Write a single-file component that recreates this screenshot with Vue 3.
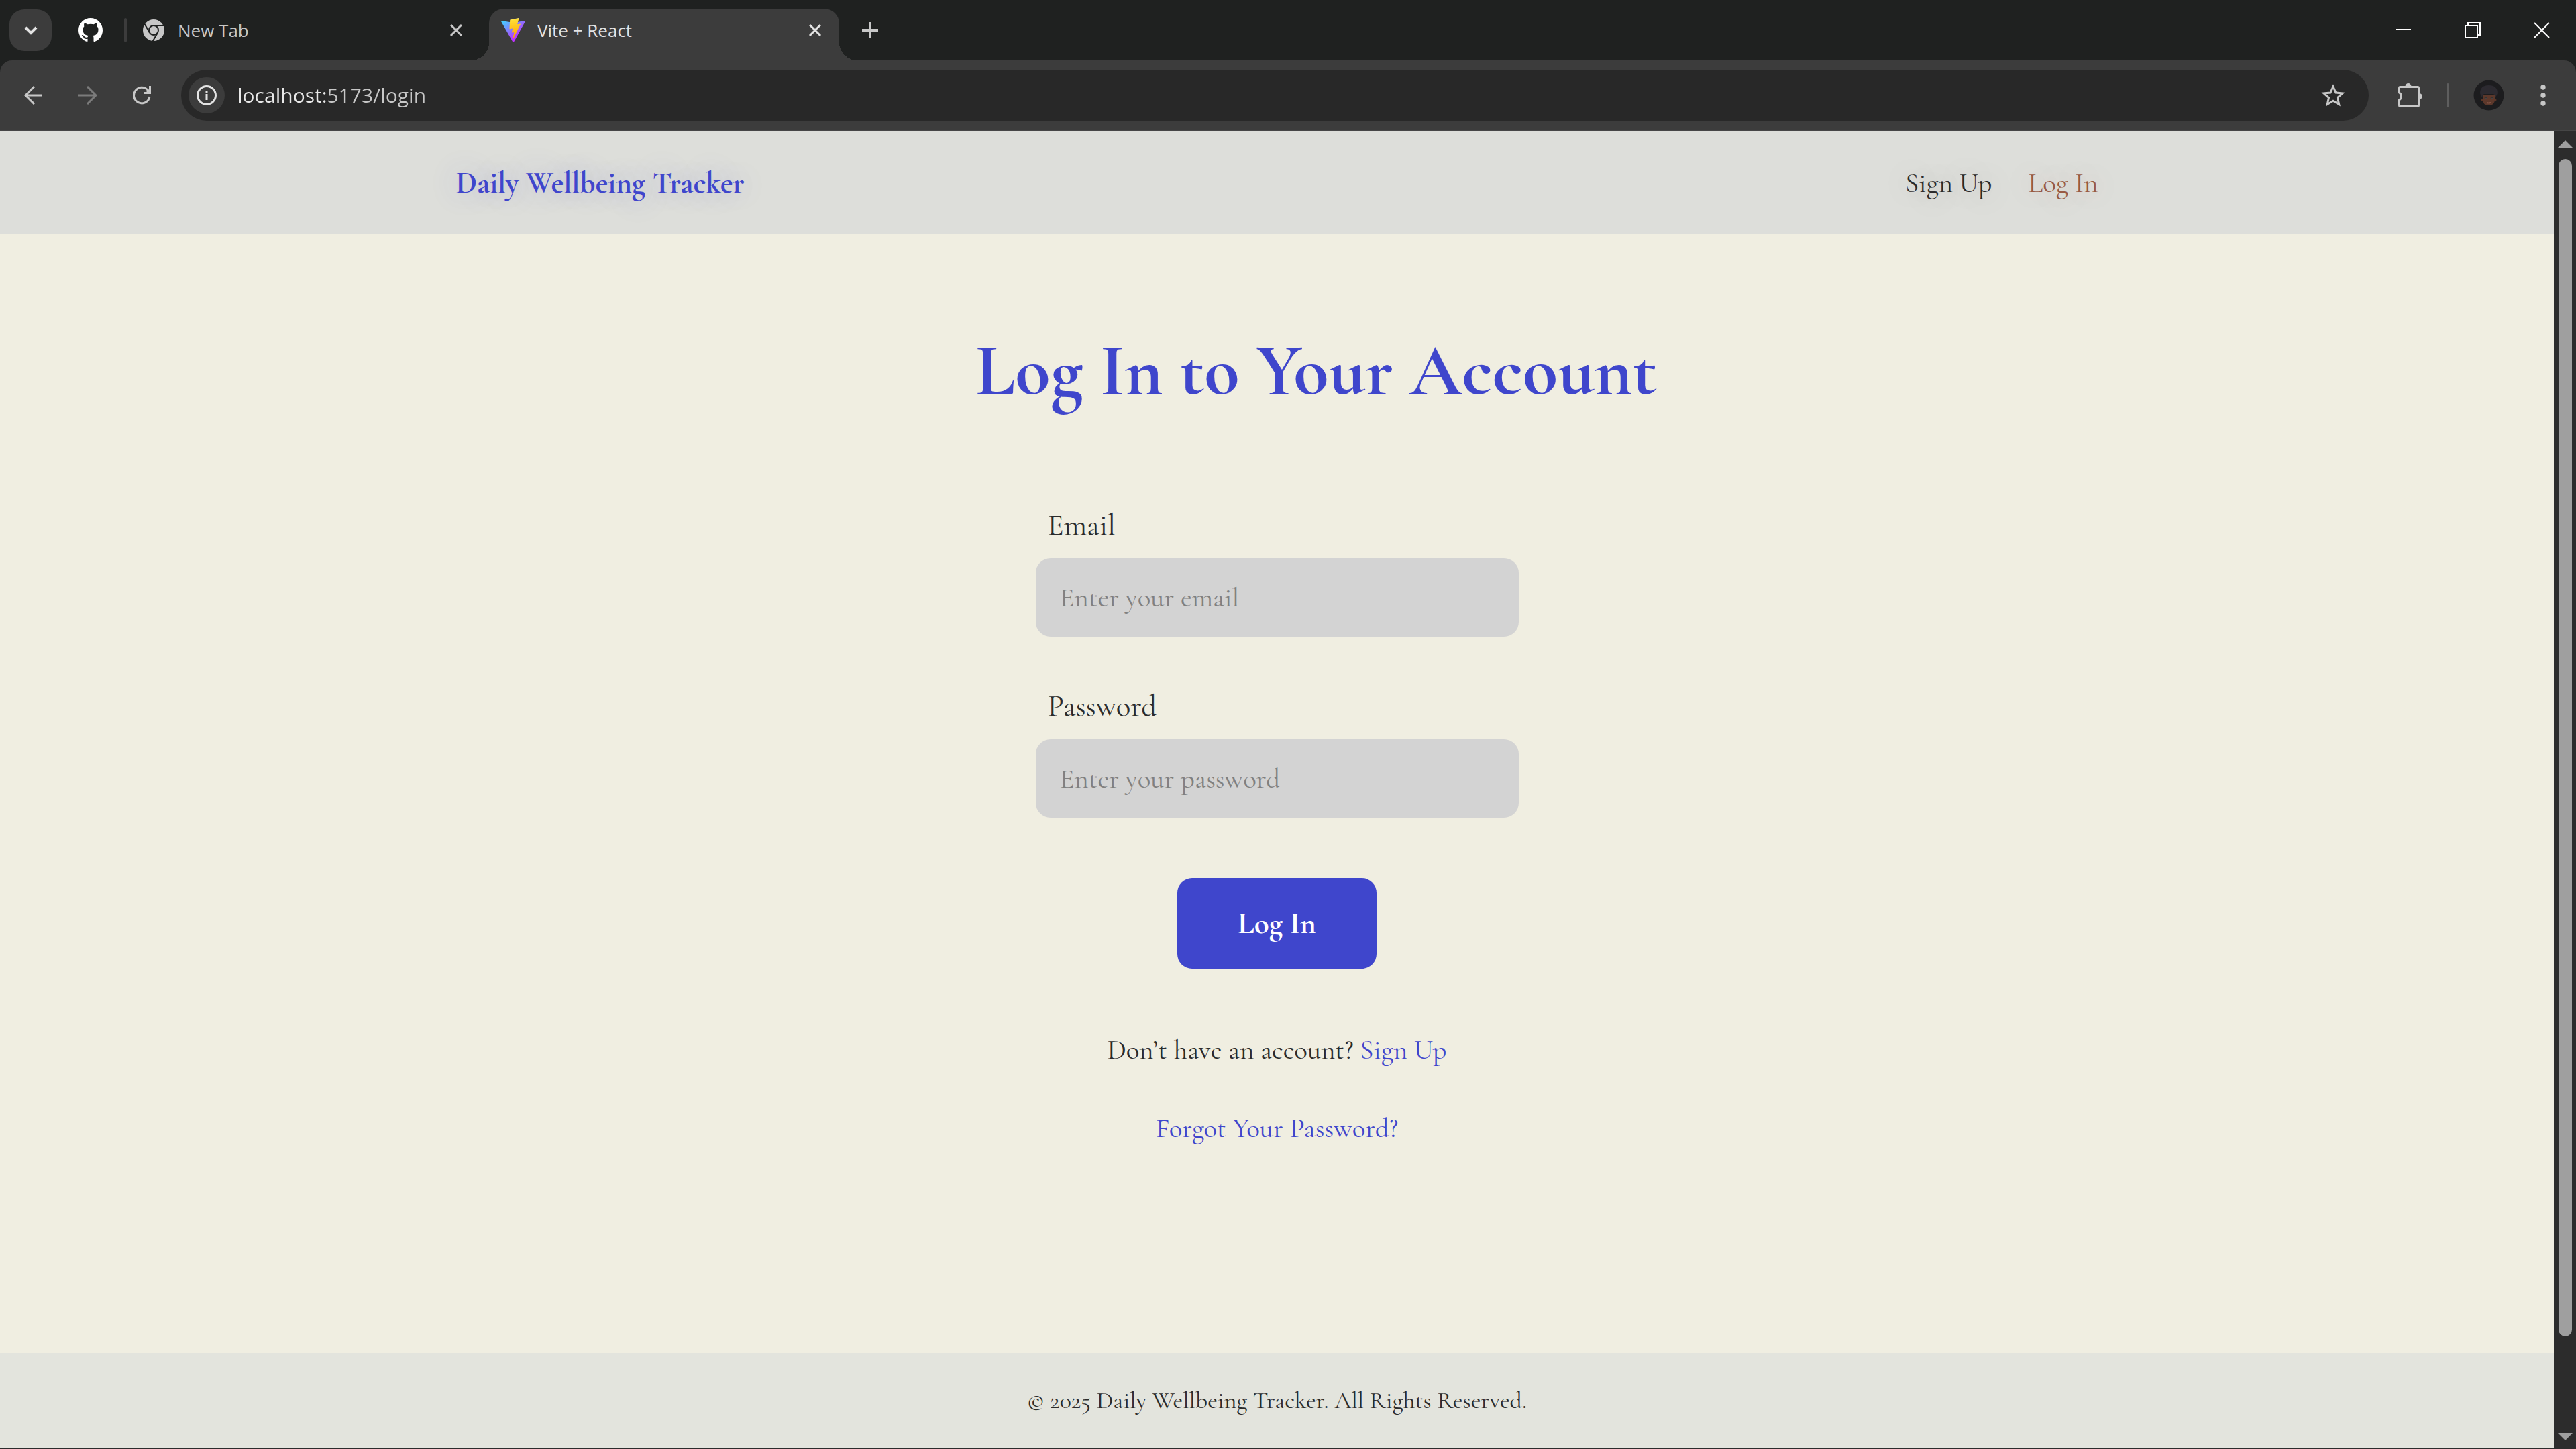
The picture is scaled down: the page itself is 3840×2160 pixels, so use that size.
<script setup>
import { ref } from 'vue'

const url = ref('localhost:5173/login')
const email = ref('')
const password = ref('')
const year = 2025
</script>

<template>
  <div class="window">
    <header class="chrome">
      <div class="tabstrip">
        <button class="tab-search" aria-label="Search tabs">
          <svg width="20" height="16" viewBox="0 0 20 16"><path d="M2 4l8 8 8-8" fill="none" stroke="#e3e3e3" stroke-width="4" /></svg>
        </button>
        <button class="pinned" aria-label="GitHub">
          <svg width="36" height="36" viewBox="0 0 16 16"><path fill="#fff" d="M8 0C3.58 0 0 3.58 0 8c0 3.54 2.29 6.53 5.47 7.59.4.07.55-.17.55-.38 0-.19-.01-.82-.01-1.49-2.01.37-2.53-.49-2.69-.94-.09-.23-.48-.94-.82-1.13-.28-.15-.68-.52-.01-.53.63-.01 1.08.58 1.23.82.72 1.21 1.87.87 2.33.66.07-.52.28-.87.51-1.07-1.78-.2-3.64-.89-3.64-3.95 0-.87.31-1.59.82-2.15-.08-.2-.36-1.02.08-2.12 0 0 .67-.21 2.2.82.64-.18 1.32-.27 2-.27s1.36.09 2 .27c1.53-1.04 2.2-.82 2.2-.82.44 1.1.16 1.92.08 2.12.51.56.82 1.27.82 2.15 0 3.07-1.87 3.75-3.65 3.95.29.25.54.73.54 1.48 0 1.07-.01 1.93-.01 2.2 0 .21.15.46.55.38A8.01 8.01 0 0 0 16 8c0-4.42-3.58-8-8-8z" /></svg>
        </button>
        <span class="strip-divider"></span>
        <div class="tab">
          <svg width="32" height="32" viewBox="0 0 32 32">
            <circle cx="16" cy="16" r="16" fill="#c7c7c7" />
            <g fill="none" stroke="#1f2120" stroke-width="2">
              <circle cx="16" cy="16" r="7" />
              <path d="M16 9h15M9.900 19.500L2.400 6.500M22.100 19.500L14.600 32.500" />
            </g>
          </svg>
          <span class="tab-title">New Tab</span>
          <button class="tab-close" aria-label="Close New Tab">
            <svg width="20" height="20" viewBox="0 0 20 20"><path d="M2 2l16 16M18 2L2 18" stroke="#c7c7c7" stroke-width="3" /></svg>
          </button>
        </div>
        <div class="tab active">
          <svg width="36" height="36" viewBox="0 0 256 257">
            <defs>
              <linearGradient id="vite-body" x1="-.828%" x2="57.636%" y1="7.652%" y2="78.411%"><stop offset="0%" stop-color="#41D1FF" /><stop offset="100%" stop-color="#BD34FE" /></linearGradient>
              <linearGradient id="vite-bolt" x1="43.376%" x2="50.316%" y1="2.242%" y2="89.030%"><stop offset="0%" stop-color="#FFEA83" /><stop offset="8.333%" stop-color="#FFDD35" /><stop offset="100%" stop-color="#FFA800" /></linearGradient>
            </defs>
            <path fill="url(#vite-body)" d="M255.153 37.938L134.897 252.976c-2.483 4.440-8.862 4.466-11.382.048L.875 37.958c-2.746-4.814 1.371-10.646 6.827-9.670l120.385 21.517a6.537 6.537 0 0 0 2.322-.004l117.867-21.483c5.438-.991 9.574 4.796 6.877 9.620Z" />
            <path fill="url(#vite-bolt)" d="M185.432.063L96.440 17.501a3.268 3.268 0 0 0-2.634 3.014l-5.474 92.456a3.268 3.268 0 0 0 3.997 3.378l24.777-5.718c2.318-.535 4.413 1.507 3.936 3.838l-7.361 36.047c-.495 2.426 1.782 4.500 4.151 3.780l15.304-4.649c2.372-.720 4.652 1.360 4.150 3.788l-11.698 56.621c-.732 3.542 3.979 5.473 5.943 2.437l1.313-2.028l72.516-144.720c1.215-2.423-.880-5.186-3.540-4.672l-25.505 4.922c-2.396.462-4.435-1.770-3.759-4.114l16.646-57.705c.677-2.350-1.370-4.583-3.769-4.113Z" />
          </svg>
          <span class="tab-title">Vite + React</span>
          <button class="tab-close" aria-label="Close Vite + React">
            <svg width="20" height="20" viewBox="0 0 20 20"><path d="M2 2l16 16M18 2L2 18" stroke="#e3e3e3" stroke-width="3" /></svg>
          </button>
        </div>
        <button class="new-tab" aria-label="New tab">
          <svg width="24" height="24" viewBox="0 0 24 24"><path d="M12 0v24M0 12h24" stroke="#c7c7c7" stroke-width="4" /></svg>
        </button>
        <div class="window-controls">
          <button aria-label="Minimize"><svg width="24" height="24" viewBox="0 0 24 24"><path d="M0 11h23" stroke="#fff" stroke-width="2" /></svg></button>
          <button aria-label="Restore"><svg width="24" height="24" viewBox="0 0 24 24"><path d="M1 5h18v18H1zM5 5V1h18v18h-4" fill="none" stroke="#fff" stroke-width="2" /></svg></button>
          <button aria-label="Close window"><svg width="24" height="24" viewBox="0 0 24 24"><path d="M1 1l22 22M23 1L1 23" stroke="#fff" stroke-width="2" /></svg></button>
        </div>
      </div>

      <div class="toolbar">
        <button class="tool" aria-label="Back"><svg width="28" height="28" viewBox="0 0 28 28"><path d="M27 14H3M15 1L2 14l13 13" fill="none" stroke="#c7c7c7" stroke-width="3" /></svg></button>
        <button class="tool" aria-label="Forward" disabled><svg width="28" height="28" viewBox="0 0 28 28"><path d="M0 14h25M13 1l13 13-13 13" fill="none" stroke="#7b7b7b" stroke-width="3" /></svg></button>
        <button class="tool" aria-label="Reload"><svg width="28" height="28" viewBox="0 0 28 28"><path d="M25 16A11.800 11.800 0 1 1 22 6l3.500 3.500" fill="none" stroke="#c7c7c7" stroke-width="3" /><path d="M24 0h3v12H16V9h4l4-4z" fill="#c7c7c7" /></svg></button>
        <div class="omnibox">
          <button class="site-info" aria-label="Site information">
            <svg width="30" height="30" viewBox="0 0 30 30"><circle cx="15" cy="15" r="13.500" fill="none" stroke="#e3e3e3" stroke-width="3" /><path d="M15 13v9M15 8v3" stroke="#e3e3e3" stroke-width="3" /></svg>
          </button>
          <input v-model="url" class="address" type="text" aria-label="Address" />
          <button class="bookmark" aria-label="Bookmark this tab">
            <svg width="36" height="36" viewBox="0 0 36 36"><path d="M18 5l4 9 10 1-7.500 6.500 2.200 10L18 26.300l-8.700 5.200 2.200-10L4 15l10-1z" fill="none" stroke="#c7c7c7" stroke-width="3" /></svg>
          </button>
        </div>
        <button class="extensions" aria-label="Extensions">
          <svg width="38" height="38" viewBox="0 0 38 38"><path d="M5 6.500h26q1.500 0 1.500 1.500v26q0 1.500-1.500 1.500H5q-1.500 0-1.500-1.500v-8a6.500 6.500 0 0 0 0-11V8q0-1.500 1.500-1.500z" fill="none" stroke="#c7c7c7" stroke-width="3" /><path d="M12.500 6a4.500 5 0 0 1 9 0zM33 16a5 4.500 0 0 1 0 9z" fill="#c7c7c7" /></svg>
        </button>
        <span class="tool-divider"></span>
        <button class="profile" aria-label="Profile">
          <svg width="46" height="46" viewBox="0 0 46 46">
            <circle cx="23" cy="23" r="22.500" fill="#1c1c1e" />
            <circle cx="13.500" cy="30" r="2" fill="#5a3426" /><circle cx="32.500" cy="30" r="2" fill="#5a3426" />
            <path d="M14 22h18v7q0 9-9 9t-9-9z" fill="#5c382b" />
            <path d="M10 20q0-12 13-12t13 12q-1 3-3 6-1-5-4-5H17q-3 0-4 5-2-3-3-6z" fill="#2c2a30" />
            <circle cx="18.500" cy="27" r="1.700" fill="#0f0c0b" /><circle cx="27.500" cy="27" r="1.700" fill="#0f0c0b" />
            <circle cx="19" cy="27" r="0.600" fill="#ddd" /><circle cx="28" cy="27" r="0.600" fill="#ddd" />
            <path d="M20 34q3 1 6 0" stroke="#9a6152" stroke-width="1.500" fill="none" />
          </svg>
        </button>
        <button class="menu" aria-label="Menu">
          <svg width="8" height="32" viewBox="0 0 8 32" fill="#c7c7c7"><circle cx="4" cy="4" r="3.700" /><circle cx="4" cy="16" r="3.700" /><circle cx="4" cy="28" r="3.700" /></svg>
        </button>
      </div>
    </header>

    <div class="viewport">
      <div class="page">
        <header class="site-header">
          <div class="site-bar">
            <a class="brand" href="#/">Daily Wellbeing Tracker</a>
            <nav class="site-nav">
              <a href="#/signup">Sign Up</a>
              <a class="current" href="#/login">Log In</a>
            </nav>
          </div>
        </header>

        <main class="content">
          <h1 class="title">Log In to Your Account</h1>
          <form class="form" @submit.prevent>
            <div class="field">
              <label for="email">Email</label>
              <input id="email" v-model="email" type="email" placeholder="Enter your email" />
            </div>
            <div class="field">
              <label for="password">Password</label>
              <input id="password" v-model="password" type="password" placeholder="Enter your password" />
            </div>
            <button class="submit" type="submit">Log In</button>
          </form>
          <p class="note">Don’t have an account? <a href="#/signup">Sign Up</a></p>
          <p class="note"><a href="#/forgot">Forgot Your Password?</a></p>
        </main>

        <footer class="site-footer">© {{ year }} Daily Wellbeing Tracker. All Rights Reserved.</footer>
      </div>

      <div class="scrollbar" aria-hidden="true">
        <svg class="arrow" width="22" height="11" viewBox="0 0 22 11"><path d="M11 0l11 11H0z" fill="#9f9f9f" /></svg>
        <div class="track"><div class="thumb"></div></div>
        <svg class="arrow" width="22" height="11" viewBox="0 0 22 11"><path d="M0 0h22L11 11z" fill="#9f9f9f" /></svg>
      </div>
    </div>
  </div>
</template>

<style>
body {
  background: #1f2120;
}
</style>

<style scoped>
.window {
  display: flex;
  flex-direction: column;
  box-sizing: border-box;
  min-height: 100vh;
  border-bottom: 2px solid #2c2c2c;
  font-family: "Open Sans", "Noto Sans", sans-serif;
}

button {
  display: flex;
  align-items: center;
  justify-content: center;
  padding: 0;
  border: 0;
  background: none;
  font: inherit;
  color: inherit;
}

svg {
  display: block;
  flex: none;
}

a {
  color: inherit;
  text-decoration: none;
}

/* Browser chrome */
.chrome {
  background: #1f2120;
}

.tabstrip {
  display: flex;
  align-items: center;
  height: 90px;
}

.tab-search {
  width: 63px;
  height: 62px;
  margin-left: 14px;
  border-radius: 22px;
  background: #3c3c3c;
}

.pinned {
  width: 36px;
  margin-left: 40px;
}

.strip-divider {
  width: 4px;
  height: 36px;
  margin-left: 32px;
  border-radius: 2px;
  background: #3c3c3c;
}

.tab {
  display: flex;
  align-items: center;
  box-sizing: border-box;
  width: 540px;
  height: 77px;
  padding: 0 39px 0 24px;
  color: #c7c7c7;
}

.tab-title {
  flex: 1;
  margin-left: 20px;
  font-size: 26px;
  line-height: 36px;
}

.tab.active {
  position: relative;
  align-self: flex-end;
  width: 522px;
  padding: 0 26px 14px 18px;
  border-radius: 22px 22px 0 0;
  background: #3c3c3c;
  color: #e3e3e3;
}

.active .tab-title {
  margin-left: 18px;
}

.tab.active::before,
.tab.active::after {
  content: "";
  position: absolute;
  bottom: 0;
  width: 27px;
  height: 27px;
}

.tab.active::before {
  right: 100%;
  background: radial-gradient(circle at 0 0, transparent 27px, #3c3c3c 27px);
}

.tab.active::after {
  left: 100%;
  background: radial-gradient(circle at 100% 0, transparent 27px, #3c3c3c 27px);
}

.new-tab {
  margin-left: 34px;
}

.window-controls {
  display: flex;
  gap: 79px;
  margin-left: auto;
  padding-right: 39px;
}

.toolbar {
  display: flex;
  align-items: center;
  height: 104px;
  padding: 0 45px 0 36px;
  border-bottom: 2px solid #464646;
  border-radius: 18px 18px 0 0;
  background: #3c3c3c;
}

.tool {
  width: 28px;
  margin-right: 53px;
}

.omnibox {
  display: flex;
  flex: 1;
  align-items: center;
  box-sizing: border-box;
  height: 76px;
  margin-left: -9px;
  padding: 0 35px 0 11px;
  border-radius: 38px;
  background: #282828;
}

.site-info {
  width: 54px;
  height: 54px;
  border-radius: 50%;
  background: #3c3c3c;
}

.address {
  flex: 1;
  margin-left: 19px;
  padding: 0;
  border: 0;
  outline: 0;
  background: linear-gradient(to right, #e8e8e8 130px, #c7c7c7 130px);
  background-clip: text;
  color: transparent;
  font-family: inherit;
  font-size: 30px;
  line-height: 42px;
}

.extensions {
  margin-left: 42px;
}

.tool-divider {
  width: 4px;
  height: 36px;
  margin: 0 36px;
  border-radius: 2px;
  background: #5e5e5e;
}

.menu {
  margin-left: 54px;
}

/* Page */
.viewport {
  display: flex;
  flex: 1;
}

.page {
  display: flex;
  flex: 1;
  flex-direction: column;
  background: #f0eee1;
  color: #2b2b2b;
  font-family: "Cormorant Garamond", "Liberation Serif", serif;
}

.site-header {
  background: #dddeda;
}

.site-bar {
  display: flex;
  align-items: center;
  justify-content: space-between;
  max-width: 2448px;
  height: 153px;
  margin: 0 auto;
}

.brand {
  color: #3f46cc;
  font-size: 45px;
  font-weight: 700;
  text-shadow: 0 0 45px rgba(63, 70, 204, 0.3);
}

.site-nav {
  display: flex;
  gap: 54px;
  font-size: 41px;
  text-shadow: 0 0 45px rgba(43, 43, 43, 0.3);
}

.site-nav .current {
  color: #985a43;
  text-shadow: 0 0 45px rgba(152, 90, 67, 0.3);
}

.content {
  display: flex;
  flex: 1;
  flex-direction: column;
  align-items: center;
  padding: 144px 0;
}

.title {
  margin: 0;
  padding-left: 117px;
  color: #3f46cc;
  font-size: 108px;
  font-weight: 700;
  line-height: 120px;
}

.form {
  display: flex;
  flex-direction: column;
  align-items: center;
  width: 720px;
  max-width: 100%;
  margin: 145px 0 28px;
}

.field {
  display: flex;
  flex-direction: column;
  gap: 24px;
  width: 100%;
  margin-bottom: 79px;
}

.field label {
  padding-left: 18px;
  font-size: 45px;
  line-height: 50px;
}

.field input {
  box-sizing: border-box;
  width: 100%;
  height: 117px;
  padding: 0 36px;
  border: 0;
  border-radius: 22px;
  background: #d3d3d3;
  color: #2b2b2b;
  font-family: inherit;
  font-size: 41px;
}

.field input::placeholder {
  color: #808080;
}

.submit {
  width: 297px;
  height: 135px;
  margin-top: 11px;
  border-radius: 22px;
  background: #3f46cc;
  color: #fff;
  font-size: 45px;
  font-weight: 700;
}

.note {
  margin: 69px 0 0;
  font-size: 41px;
  line-height: 48px;
}

.note a {
  color: #3f46cc;
}

.site-footer {
  display: flex;
  align-items: center;
  justify-content: center;
  height: 141px;
  background: #e3e4dd;
  font-size: 36px;
}

.scrollbar {
  display: flex;
  flex-direction: column;
  align-items: center;
  box-sizing: border-box;
  width: 33px;
  padding: 13px 0 11px;
  background: #2c2c2c;
}

.track {
  display: flex;
  flex: 1;
  flex-direction: column;
  margin: 17px 0 19px;
}

.track::after {
  content: "";
  flex: 1;
}

.thumb {
  flex: 14;
  width: 20px;
  border-radius: 10px;
  background: #9f9f9f;
}
</style>
